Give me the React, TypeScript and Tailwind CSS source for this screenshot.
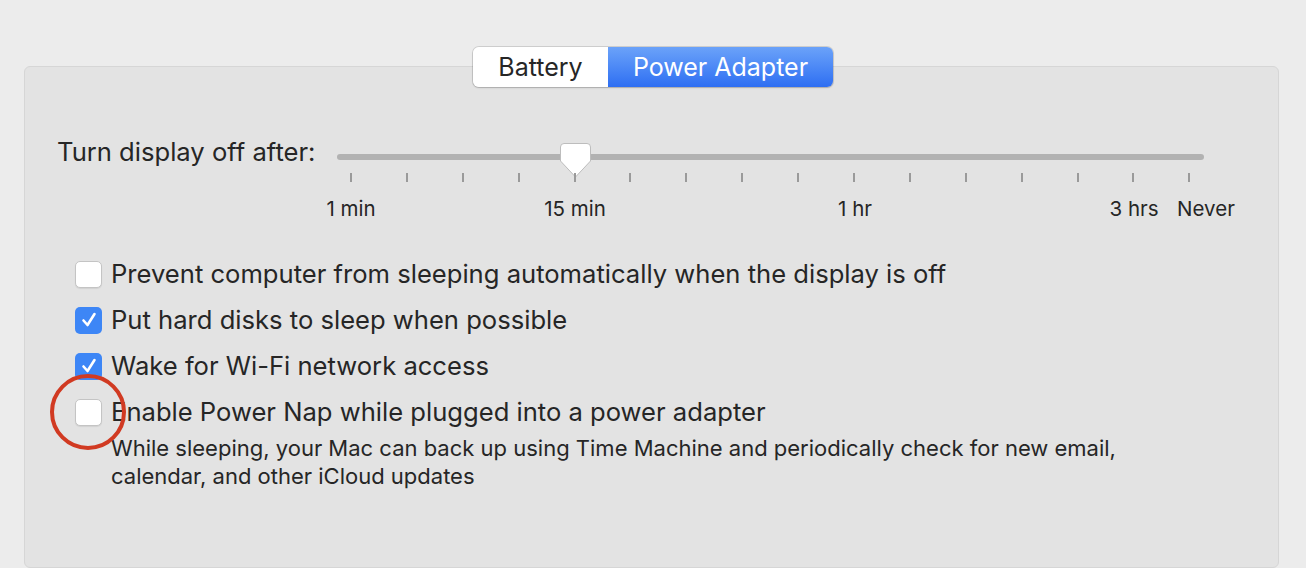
import React from "react";

const ticks = Array.from({ length: 16 }, (_, i) => i);

const labels = [
  { text: "1 min", left: 14 },
  { text: "15 min", left: 238 },
  { text: "1 hr", left: 518 },
  { text: "3 hrs", left: 797 },
  { text: "Never", left: 869 },
];

function Checkbox({ checked }: { checked: boolean }) {
  if (checked) {
    return (
      <div className="w-[27px] h-[27px] shrink-0 rounded-[5px] bg-[#3d86f6] flex items-center justify-center">
        <svg width="18" height="18" viewBox="0 0 18 18" fill="none">
          <path d="M3.5 9.5 L7.5 14 L14.5 3" stroke="white" strokeWidth="2.6" strokeLinecap="round" strokeLinejoin="round" />
        </svg>
      </div>
    );
  }
  return (
    <div className="w-[27px] h-[27px] shrink-0 rounded-[5px] bg-white border border-[#c4c4c4] shadow-[0_1px_1px_rgba(0,0,0,0.08)]" />
  );
}

function Row({ checked, label, circled }: { checked: boolean; label: string; circled?: boolean }) {
  return (
    <div className="flex items-center h-[46px] gap-[9px]">
      <div className="relative">
        <Checkbox checked={checked} />
        {circled && (
          <div className="absolute left-[-25px] top-[-25px] w-[76px] h-[76px] rounded-full border-[4px] border-[#d13a22]" />
        )}
      </div>
      <span className="text-[25.6px] text-[#262626] leading-none">{label}</span>
    </div>
  );
}

export default function App() {
  return (
    <div
      className="w-[1306px] h-[568px] overflow-hidden bg-[#ececec] flex flex-col items-center pt-[47px]"
      style={{ fontFamily: "Inter, sans-serif" }}
    >
      {/* Tabs */}
      <div className="relative z-10 flex h-[40px] rounded-[6px] shadow-[0_0_0_1px_rgba(0,0,0,0.12),0_1px_2px_rgba(0,0,0,0.15)] overflow-hidden">
        <div className="w-[135px] bg-white flex items-center justify-center pt-[2px] text-[25px] text-[#262626]">
          Battery
        </div>
        <div className="w-[225px] bg-gradient-to-b from-[#6ba2f9] to-[#2e6ef2] flex items-center justify-center pt-[2px] text-[25px] text-white">
          Power Adapter
        </div>
      </div>

      {/* Panel */}
      <div className="-mt-[21px] w-[1255px] ml-[-3px] flex-1 bg-[#e3e3e3] border border-[#d6d6d6] rounded-[6px] pt-[76px] pl-[32px]">
        {/* Slider row */}
        <div className="flex items-start">
          <div className="w-[280px] text-[25.6px] text-[#262626] leading-none -mt-[4px] whitespace-nowrap">Turn display off after:</div>
          <div className="relative w-[867px] h-[90px]">
            <div className="absolute left-0 right-0 top-[11px] h-[6px] rounded-full bg-[#b2b2b2]" />
            <div className="absolute left-[222px] top-[-1px]">
              <svg width="33" height="37" viewBox="0 0 33 37">
                <path
                  d="M5 1.5 H28 Q31.5 1.5 31.5 5 V19 L16.5 35 L1.5 19 V5 Q1.5 1.5 5 1.5 Z"
                  fill="white"
                  stroke="#bdbdbd"
                  strokeWidth="1"
                />
              </svg>
            </div>
            <div className="absolute top-[30px] left-[13px] flex gap-[53.9px]">
              {ticks.map((t) => (
                <div key={t} className="w-[2px] h-[9px] bg-[#9a9a9a]" />
              ))}
            </div>
            {labels.map((l) => (
              <div
                key={l.text}
                className="absolute top-[56px] -translate-x-1/2 text-[20.5px] text-[#262626] leading-none whitespace-nowrap"
                style={{ left: l.left }}
              >
                {l.text}
              </div>
            ))}
          </div>
        </div>

        {/* Checkboxes */}
        <div className="mt-[18px] pl-[18px]">
          <Row checked={false} label="Prevent computer from sleeping automatically when the display is off" />
          <Row checked={true} label="Put hard disks to sleep when possible" />
          <Row checked={true} label="Wake for Wi-Fi network access" />
          <Row checked={false} label="Enable Power Nap while plugged into a power adapter" circled />
          <div className="pl-[36px] text-[22px] text-[#262626] leading-[28px] -mt-[1px]">
            While sleeping, your Mac can back up using Time Machine and periodically check for new email,
            <br />
            calendar, and other iCloud updates
          </div>
        </div>
      </div>
    </div>
  );
}
